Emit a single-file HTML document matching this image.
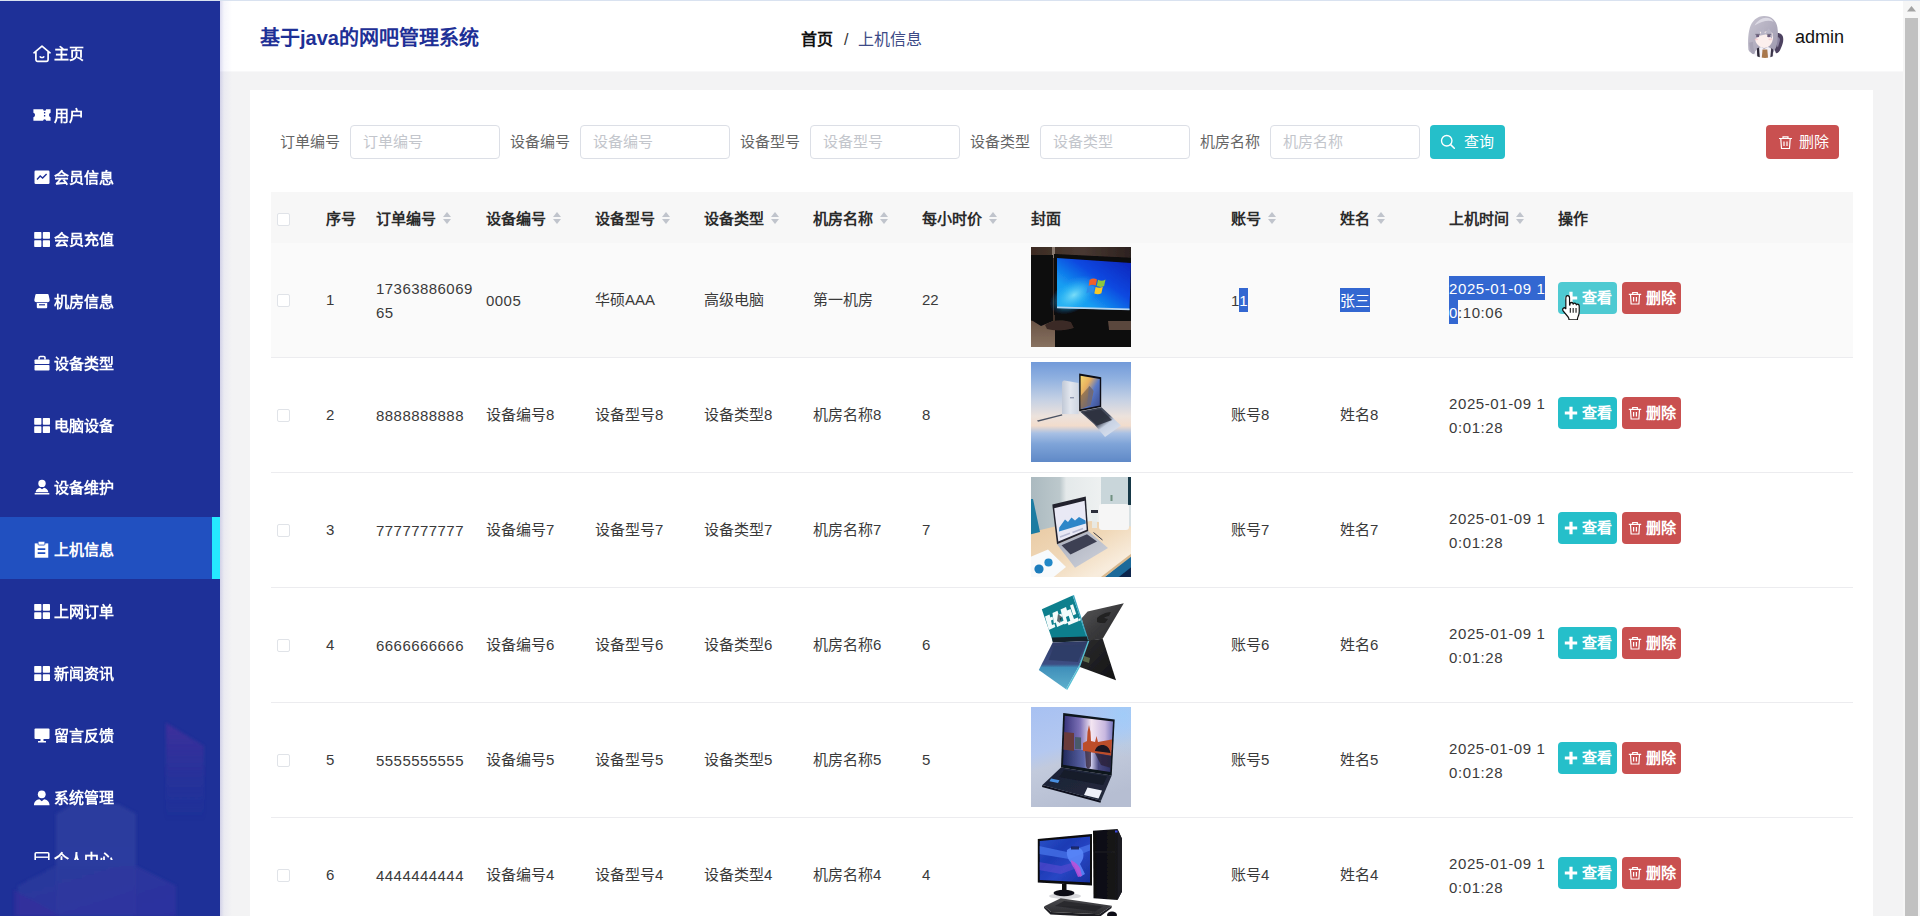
<!DOCTYPE html>
<html lang="zh-CN">
<head>
<meta charset="utf-8">
<title>基于java的网吧管理系统</title>
<style>
*{box-sizing:border-box}
html,body{margin:0;padding:0}
html{width:1920px;height:916px;overflow:hidden}
body{width:1920px;height:916px;overflow:hidden;position:relative;background:#f3f3f4;font-family:"Liberation Sans",sans-serif;font-size:15px;color:#333;-webkit-font-smoothing:antialiased}
svg{display:block}
/* ---------- sidebar ---------- */
.side{position:absolute;left:0;top:0;width:220px;height:916px;background:#1e3098;overflow:hidden;z-index:5}
.side .deco{position:absolute;left:0;top:690px;width:220px;height:226px}
.menu{position:absolute;left:0;top:22px;width:220px;height:838px;overflow:hidden;margin:0;padding:0;list-style:none}
.menu li{height:62px;line-height:64px;color:#fff;font-size:15px;font-weight:bold;padding-left:54px;position:relative;white-space:nowrap}
.menu li svg{position:absolute;left:33px;top:22px;width:18px;height:18px}
.menu li.on{background:#2150c0;border-right:8px solid #25eaff;top:-1px;line-height:66px}
.menu li.on svg{top:22.500px;left:32px;width:19px;height:19px}
/* ---------- header ---------- */
.top{position:absolute;left:220px;top:0;width:1683px;height:72px;background:#fff;border-top:1px solid #e4e4e8;border-bottom:1px solid #f8f8f9;z-index:2}
.top h1{position:absolute;left:40px;top:25px;margin:0;font-size:20px;line-height:24px;font-weight:bold;color:#1e3096;white-space:nowrap}
.crumb{position:absolute;left:581px;top:28px;font-size:16px;line-height:22px;white-space:nowrap;color:#3d4a86}
.crumb b{color:#111}
.crumb i{font-style:normal;color:#333;margin:0 10px 0 11px}
.user{position:absolute;left:1575px;top:26px;font-size:18px;line-height:20px;color:#111}
.avatar{position:absolute;left:1523px;top:13px;width:44px;height:44px}
.edge{position:absolute;left:220px;top:0;width:12px;height:916px;background:linear-gradient(90deg,rgba(90,90,190,.22) 0,rgba(90,90,190,.06) 4px,rgba(90,90,190,0) 12px);z-index:4}
/* ---------- card ---------- */
.card{position:absolute;left:250px;top:90px;width:1623px;height:826px;background:#fff;overflow:hidden}
.flt{position:absolute;top:35px;height:34px;line-height:34px;font-size:15px;color:#666;white-space:nowrap}
.flt span{position:absolute;left:0;top:0;width:60px}
.flt em{position:absolute;left:70px;top:0;width:150px;height:34px;border:1px solid #dcdfe6;border-radius:4px;background:#fff;font-style:normal;color:#c3c6cc;padding-left:12px;line-height:31px;font-size:15px}
.btn{position:absolute;height:34px;border-radius:4px;color:#fff;font-size:15px;line-height:34px;white-space:nowrap}
.btn svg{position:absolute}
.q{left:1180px;top:35px;width:75px;background:#25bfca}
.d{left:1516px;top:35px;width:73px;background:#c95050}
/* ---------- table ---------- */
table{position:absolute;left:21px;top:102px;width:1582px;border-collapse:separate;border-spacing:0;table-layout:fixed}
th,td{padding:0 0 0 10px;text-align:left;vertical-align:middle;font-size:15px;line-height:24px}
th{height:51px;background:#f7f7f7;padding-top:2px}
td>span,td>mark{position:relative;top:.5px}
th{font-weight:bold;color:#2b2b2b;white-space:nowrap}
td{height:115px;border-bottom:1px solid #ececef}
tr.hv td{background:#fafafa}
td{color:#3a3a3a}
.ck{display:block;width:13px;height:13px;border:1px solid #e0e3e8;border-radius:2px;background:#fff;margin-left:-4px;position:relative;top:.5px}
.st{display:inline-block;vertical-align:middle;width:10px;height:14px;margin-left:6px;position:relative;top:-2px}
.th{display:block;width:100px;height:100px;position:relative;top:-3px}
.ab{display:inline-block;vertical-align:middle;position:relative;top:-2px;width:59px;height:32px;border-radius:4px;color:#fff;font-size:15px;font-weight:bold;line-height:31px;padding-left:24px;margin-right:5px;white-space:nowrap}
.ab svg{position:absolute}
.v{background:#25bfca}.v.h{background:#4ecad2}
.x{background:#c95050}
mark{background:#3367d1;color:#fff;padding:4px 0 3px}
.n{letter-spacing:.45px}.t{letter-spacing:.6px}
/* ---------- scrollbar ---------- */
.sb{position:absolute;left:1903px;top:0;width:17px;height:916px;background:#f6f6f6;z-index:6}
.sb b{position:absolute;left:2px;top:18px;width:13px;height:898px;background:#c1c1c1}
.cur{position:absolute;left:1562px;top:294.500px;width:18.500px;height:25.500px;z-index:9}
</style>
</head>
<body>
<aside class="side">
<svg class="deco" viewBox="0 0 220 226">
<defs>
<linearGradient id="dg1" x1="0" y1="0" x2="0" y2="1"><stop offset="0" stop-color="#4a2d9c" stop-opacity=".75"/><stop offset="1" stop-color="#2c3aa0" stop-opacity="0"/></linearGradient>
<linearGradient id="dg2" x1="0" y1="0" x2="0" y2="1"><stop offset="0" stop-color="#2c3f9e"/><stop offset="1" stop-color="#2d3fa1"/></linearGradient>
<linearGradient id="dg3" x1="0" y1="0" x2="1" y2="1"><stop offset="0" stop-color="#2a3c9c"/><stop offset="1" stop-color="#3030a0"/></linearGradient>
<filter id="dgb" x="-5%" y="-5%" width="110%" height="110%"><feGaussianBlur stdDeviation="1.6"/></filter>
</defs>
<g filter="url(#dgb)">
<polygon points="166,33 204,56 204,130 166,130" fill="url(#dg1)"/>
<polygon points="56,124 74,114 118,114 136,124 136,226 56,226" fill="url(#dg2)" opacity=".9"/>
<polygon points="18,196 56,176 136,176 176,196 176,226 18,226" fill="url(#dg3)" opacity=".85"/>
<polygon points="14,200 60,226 14,226" fill="#3a2c9c" opacity=".55"/>
</g>
</svg>
<ul class="menu">
<li><svg viewBox="0 0 18 18" style="top:23px"><path d="M1 7.800 9 1.200 17 7.800" fill="none" stroke="#fff" stroke-width="1.700" stroke-linejoin="round" stroke-linecap="round"/><path d="M2.900 6.800V14.600a1.700 1.700 0 0 0 1.700 1.700h8.800a1.700 1.700 0 0 0 1.700-1.700V6.800" fill="none" stroke="#fff" stroke-width="1.700"/><path d="M7.200 11.800q1.800 1.500 3.600 0" fill="none" stroke="#fff" stroke-width="1.500" stroke-linecap="round"/></svg>主页</li>
<li><svg viewBox="0 0 18 18"><path d="M.4 3.200h9.700a1.500 1.500 0 0 0 3 0h4.500v3.600a2.300 2.300 0 0 0 0 4.400v3.600h-4.500a1.500 1.500 0 0 0-3 0H.4v-3.600a2.300 2.300 0 0 0 0-4.400Z" fill="#fff"/><path d="M11.600 6v6" stroke="#1e3098" stroke-width="1.300" stroke-dasharray="1.500 1.500"/></svg>用户</li>
<li><svg viewBox="0 0 18 18"><rect x="1.5" y="2.5" width="15" height="13.5" rx="1.2" fill="#fff"/><path d="M4 11.5 7.2 8l2.4 2 4-4" fill="none" stroke="#1e3098" stroke-width="1.4"/></svg>会员信息</li>
<li><svg viewBox="0 0 18 18"><g fill="#fff"><rect x="1.2" y="2" width="7.200" height="6.800" rx=".7"/><rect x="9.800" y="2" width="7.200" height="6.800" rx=".7"/><rect x="1.2" y="10.200" width="7.200" height="6.800" rx=".7"/><rect x="9.800" y="10.200" width="7.200" height="6.800" rx=".7"/></g></svg>会员充值</li>
<li><svg viewBox="0 0 18 18"><path d="M3.400 2h11.200a1 1 0 0 1 1 .8l1 4.700a2.300 2.300 0 0 1-2.300 2.700H3.700A2.300 2.300 0 0 1 1.400 7.500l1-4.700a1 1 0 0 1 1-.8Z" fill="#fff"/><path d="M3.800 11h10.400v4.200a1 1 0 0 1-1 1H4.800a1 1 0 0 1-1-1Z" fill="#fff"/><path d="M6 12.800h6" stroke="#1e3098" stroke-width="1.200"/></svg>机房信息</li>
<li><svg viewBox="0 0 18 18"><path d="M6 5.500V3.800A1.300 1.300 0 0 1 7.300 2.500h3.400A1.300 1.300 0 0 1 12 3.800V5.500" fill="none" stroke="#fff" stroke-width="1.600"/><rect x="1.500" y="5.500" width="15" height="4.600" rx=".8" fill="#fff"/><rect x="1.500" y="11" width="15" height="5.500" rx=".8" fill="#fff"/></svg>设备类型</li>
<li><svg viewBox="0 0 18 18"><g fill="#fff"><rect x="1.2" y="2" width="7.200" height="6.800" rx=".7"/><rect x="9.800" y="2" width="7.200" height="6.800" rx=".7"/><rect x="1.2" y="10.200" width="7.200" height="6.800" rx=".7"/><rect x="9.800" y="10.200" width="7.200" height="6.800" rx=".7"/></g></svg>电脑设备</li>
<li><svg viewBox="0 0 18 18"><circle cx="9" cy="5.400" r="3.700" fill="#fff"/><path d="M2.600 14.200c.3-2.600 2.300-4 4.400-4.400L9 11.200l2-1.400c2.100.4 4.100 1.800 4.400 4.400Z" fill="#fff"/><rect x="1.600" y="14.900" width="14.800" height="1.700" rx=".5" fill="#fff"/></svg>设备维护</li>
<li class="on"><svg viewBox="0 0 18 18"><path d="M2.600 3.200h12.800v13.600H2.600Z" fill="#fff"/><rect x="5.800" y="1.200" width="6.400" height="3.600" rx=".8" fill="#fff" stroke="#2150c0" stroke-width=".8"/><path d="M5.400 8.600h7.200M5.400 12.400h7.200" stroke="#2150c0" stroke-width="1.700"/></svg>上机信息</li>
<li><svg viewBox="0 0 18 18"><g fill="#fff"><rect x="1.2" y="2" width="7.200" height="6.800" rx=".7"/><rect x="9.800" y="2" width="7.200" height="6.800" rx=".7"/><rect x="1.2" y="10.200" width="7.200" height="6.800" rx=".7"/><rect x="9.800" y="10.200" width="7.200" height="6.800" rx=".7"/></g></svg>上网订单</li>
<li><svg viewBox="0 0 18 18"><g fill="#fff"><rect x="1.2" y="2" width="7.200" height="6.800" rx=".7"/><rect x="9.800" y="2" width="7.200" height="6.800" rx=".7"/><rect x="1.2" y="10.200" width="7.200" height="6.800" rx=".7"/><rect x="9.800" y="10.200" width="7.200" height="6.800" rx=".7"/></g></svg>新闻资讯</li>
<li><svg viewBox="0 0 18 18"><rect x="1.500" y="2.500" width="15" height="10.500" rx="1" fill="#fff"/><path d="M7.500 13h3v2h-3ZM5 15h8v1.400H5Z" fill="#fff"/></svg>留言反馈</li>
<li><svg viewBox="0 0 18 18" style="left:32px;top:21.500px;width:19.500px;height:19.500px"><circle cx="9" cy="5.800" r="3.600" fill="#fff"/><path d="M1.800 16c0-3.600 2.600-5.200 5-5.600L9 12.200l2.200-1.800c2.400.4 5 2 5 5.600Z" fill="#fff"/></svg>系统管理</li>
<li><svg viewBox="0 0 18 18"><rect x="2.200" y="2.800" width="13.600" height="11" rx="1" fill="none" stroke="#fff" stroke-width="1.600"/><path d="M2.200 7.200h13.600" stroke="#fff" stroke-width="1.400"/></svg>个人中心</li>
</ul>
</aside>
<div class="edge"></div>
<header class="top">
<h1>基于java的网吧管理系统</h1>
<nav class="crumb"><b>首页</b><i>/</i>上机信息</nav>
<svg class="avatar" viewBox="0 0 46 46"><defs>
<clipPath id="avc"><circle cx="23" cy="23" r="23"/></clipPath>
<linearGradient id="avh" x1="0" y1="0" x2="1" y2="1"><stop offset="0" stop-color="#c9c6d2"/><stop offset=".5" stop-color="#b3afc0"/><stop offset="1" stop-color="#9d98ae"/></linearGradient>
<filter id="avb" x="-5%" y="-5%" width="110%" height="110%"><feGaussianBlur stdDeviation=".45"/></filter>
</defs><g clip-path="url(#avc)"><rect width="46" height="46" fill="#fff"/><g filter="url(#avb)">
<path d="M33 21c3-2 7-1 8.500 2 1.500 4 0 9-2 13-1 3-3 5-5 5l-3-8Z" fill="#4d4360"/>
<path d="M36 24c1.500 0 3 1.500 2.500 4l-2 7-2-4Z" fill="#8c84a0"/>
<path d="M6 40c-1-8-1-18 1-25C9 7 15 2 22 2c8 0 13 5 14 12 1 6 .5 13-1 20l-4 8H9Z" fill="url(#avh)"/>
<path d="M12 12c3-5 8-8 12-8 3 0 6 1 8 4-5-2-12-1-20 4Z" fill="#dcdae4"/>
<path d="M13 24c0-3 1-5 2-6l6 1 6-1.500 4 3c.8 3 .5 6-.5 8.500-1.500 4-5 6.500-8.500 6.500S14 32 13 28Z" fill="#fcefed"/>
<path d="M12 22c1-4 3-6 5-7l1 6 3-6 2 5 4-5 4 7-1 4-4-5-5 1-5 1-3 4Z" fill="#b9b5c6"/>
<ellipse cx="15.300" cy="23" rx="1.700" ry="1.400" fill="#6c5c7c"/><ellipse cx="27" cy="23" rx="1.800" ry="1.400" fill="#6c5c7c"/>
<path d="M13 21.300h4.500M24.800 21.300h4.600" stroke="#4a4058" stroke-width=".7"/>
<ellipse cx="14" cy="26.500" rx="2" ry="1" fill="#f6c8cc" opacity=".7"/><ellipse cx="28.500" cy="26.500" rx="2" ry="1" fill="#f6c8cc" opacity=".7"/>
<path d="M11 46c0-6 3-10 8-11.500l3 2 4-2c4 1 7 5 7 11.500Z" fill="#f4f2f8"/>
<path d="M14.500 36l2.300-1 .8 11h-2.600Z" fill="#2a2634"/><path d="M29.500 35.500l2 1.500-.5 9h-2.500Z" fill="#3a3448"/>
<path d="M20.400 37h5l.8 9h-6.600Z" fill="#a8784e"/>
<path d="M6.500 30c.5 5 1.500 9 3 12l3-1c-1.500-4-2-8-2-12Z" fill="#a8a4b6"/>
</g></g></svg>
<div class="user">admin</div>
</header>
<main class="card">
<div class="flt" style="left:30px"><span>订单编号</span><em>订单编号</em></div>
<div class="flt" style="left:260px"><span>设备编号</span><em>设备编号</em></div>
<div class="flt" style="left:490px"><span>设备型号</span><em>设备型号</em></div>
<div class="flt" style="left:720px"><span>设备类型</span><em>设备类型</em></div>
<div class="flt" style="left:950px"><span>机房名称</span><em>机房名称</em></div>
<div class="btn q" style="padding-left:34px"><svg style="left:10px;top:9px" width="16" height="16" viewBox="0 0 19 19"><circle cx="8" cy="8" r="6.2" fill="none" stroke="#fff" stroke-width="1.6"/><path d="M12.600 12.600 17 17" stroke="#fff" stroke-width="1.800" stroke-linecap="round"/></svg>查询</div>
<div class="btn d" style="padding-left:33px"><svg style="left:12px;top:10px" width="15" height="15" viewBox="0 0 15 15"><path d="M1 3.500h13M5 3.300V1.800h5v1.500M2.800 3.800l.7 9.700h8l.7-9.700M6 6.500v4.500M9 6.500v4.500" fill="none" stroke="#fff" stroke-width="1.200"/></svg>删除</div>
<table>
<colgroup><col style="width:45px"><col style="width:50px"><col style="width:110px"><col style="width:109px"><col style="width:109px"><col style="width:109px"><col style="width:109px"><col style="width:109px"><col style="width:200px"><col style="width:109px"><col style="width:109px"><col style="width:109px"><col style="width:305px"></colgroup>
<thead><tr>
<th><i class="ck"></i></th>
<th>序号</th>
<th>订单编号<svg class="st" viewBox="0 0 10 14"><path d="M5 1 9 6H1Z" fill="#c0c4cc"/><path d="M5 13 9 8H1Z" fill="#c0c4cc"/></svg></th>
<th>设备编号<svg class="st" viewBox="0 0 10 14"><path d="M5 1 9 6H1Z" fill="#c0c4cc"/><path d="M5 13 9 8H1Z" fill="#c0c4cc"/></svg></th>
<th>设备型号<svg class="st" viewBox="0 0 10 14"><path d="M5 1 9 6H1Z" fill="#c0c4cc"/><path d="M5 13 9 8H1Z" fill="#c0c4cc"/></svg></th>
<th>设备类型<svg class="st" viewBox="0 0 10 14"><path d="M5 1 9 6H1Z" fill="#c0c4cc"/><path d="M5 13 9 8H1Z" fill="#c0c4cc"/></svg></th>
<th>机房名称<svg class="st" viewBox="0 0 10 14"><path d="M5 1 9 6H1Z" fill="#c0c4cc"/><path d="M5 13 9 8H1Z" fill="#c0c4cc"/></svg></th>
<th>每小时价<svg class="st" viewBox="0 0 10 14"><path d="M5 1 9 6H1Z" fill="#c0c4cc"/><path d="M5 13 9 8H1Z" fill="#c0c4cc"/></svg></th>
<th>封面</th>
<th>账号<svg class="st" viewBox="0 0 10 14"><path d="M5 1 9 6H1Z" fill="#c0c4cc"/><path d="M5 13 9 8H1Z" fill="#c0c4cc"/></svg></th>
<th>姓名<svg class="st" viewBox="0 0 10 14"><path d="M5 1 9 6H1Z" fill="#c0c4cc"/><path d="M5 13 9 8H1Z" fill="#c0c4cc"/></svg></th>
<th>上机时间<svg class="st" viewBox="0 0 10 14"><path d="M5 1 9 6H1Z" fill="#c0c4cc"/><path d="M5 13 9 8H1Z" fill="#c0c4cc"/></svg></th>
<th>操作</th>
</tr></thead>
<tbody>
<tr class="hv">
<td><i class="ck"></i></td>
<td>1</td>
<td><span class="n">17363886069<br>65</span></td>
<td><span class="n">0005</span></td>
<td>华硕AAA</td>
<td>高级电脑</td>
<td>第一机房</td>
<td>22</td>
<td><svg class="th" viewBox="0 0 100 100"><defs>
<linearGradient id="a1" x1="0" y1="0" x2="1" y2="0"><stop offset="0" stop-color="#3a2a22"/><stop offset=".5" stop-color="#4a3932"/><stop offset="1" stop-color="#2a201e"/></linearGradient>
<linearGradient id="a2" x1="1" y1="0" x2="0" y2="1"><stop offset="0" stop-color="#0a22b8"/><stop offset=".4" stop-color="#0b48e0"/><stop offset=".72" stop-color="#149cf2"/><stop offset="1" stop-color="#22b0f4"/></linearGradient>
<radialGradient id="a3" cx=".5" cy=".5" r=".5"><stop offset="0" stop-color="#7fe0f8" stop-opacity=".95"/><stop offset=".5" stop-color="#3cc0f4" stop-opacity=".6"/><stop offset="1" stop-color="#1aa0f0" stop-opacity="0"/></radialGradient>
<linearGradient id="a4" x1="0" y1="0" x2="0" y2="1"><stop offset="0" stop-color="#6a5446"/><stop offset="1" stop-color="#8c7664"/></linearGradient>
<filter id="ab" x="-5%" y="-5%" width="110%" height="110%"><feGaussianBlur stdDeviation=".7"/></filter>
<clipPath id="ac"><rect width="100" height="100"/></clipPath>
</defs><g clip-path="url(#ac)"><g filter="url(#ab)">
<rect x="-3" y="-3" width="106" height="106" fill="url(#a1)"/>
<rect x="21" y="-3" width="3" height="14" fill="#8a7a70"/>
<rect x="-3" y="74" width="32" height="30" fill="url(#a4)"/>
<path d="M-3 8h25v66l-12 5-13-8Z" fill="#0b0b10"/>
<path d="M24 66h80v40H24Z" fill="#07070a"/>
<path d="M14 78c6-5 16-6 26-3l3 6c-8 3-20 3-27 1Z" fill="#3a2c26"/>
<path d="M77 74h27v9H78Z" fill="#5a473c"/>
<path d="M23 7 103 11v57L23 68Z" fill="#08080c"/>
<path d="M26 11 100 16 98.500 63 26 61Z" fill="url(#a2)"/>
<ellipse cx="43" cy="48" rx="27" ry="16" fill="url(#a3)" transform="rotate(-32 43 48)"/>
<path d="M26 59.500 98.500 61.500v1.800L26 61.300Z" fill="#b4d4ee"/>
</g>
<g filter="url(#ab)"><path d="M58.500 33c2.500-1.800 5-1.800 7.500-.6l-1.300 6.200c-2.400-1.100-4.700-1-7 .4Z" fill="#f0602a"/><path d="M67 32.800c2.500 1.200 5 1.300 7.500-.3l-1.400 6.400c-2.400 1.400-4.800 1.300-7.300.2Z" fill="#8cc63c"/><path d="M56.500 40.200c2.400-1.500 4.700-1.600 7.100-.5l-1.300 6.300c-2.400-1.100-4.700-1-7 .4Z" fill="#2a8cea"/><path d="M64.600 40c2.400 1.100 4.800 1.200 7.200-.2l-1.400 6.400c-2.400 1.400-4.700 1.300-7.100.2Z" fill="#f8c828"/></g>
</g></svg></td>
<td><span class="n" style="letter-spacing:.9px">1<mark>1</mark></span></td>
<td><mark>张三</mark></td>
<td><span class="t"><mark>2025-01-09 1</mark><br><mark>0</mark>:10:06</span></td>
<td><span class="ab v h"><svg style="left:6px;top:9px" width="14" height="14" viewBox="0 0 14 14"><path d="M7 .8v12.400M.8 7h12.400" stroke="#fff" stroke-width="3.2"/></svg>查看</span><span class="ab x"><svg style="left:6px;top:8.500px" width="14" height="14" viewBox="0 0 14 14"><path d="M.8 3.300h12.400M4.700 3.100V1.500h4.600v1.600M2.500 3.600l.6 9.400h7.800l.6-9.400M5.600 6v4.600M8.400 6v4.600" fill="none" stroke="#fff" stroke-width="1.200"/></svg>删除</span></td>
</tr>
<tr>
<td><i class="ck"></i></td>
<td>2</td>
<td><span class="n">8888888888</span></td>
<td>设备编号8</td>
<td>设备型号8</td>
<td>设备类型8</td>
<td>机房名称8</td>
<td>8</td>
<td><svg class="th" viewBox="0 0 100 100"><defs>
<linearGradient id="b1" x1="0" y1="0" x2="0" y2="1"><stop offset="0" stop-color="#6c96d8"/><stop offset=".18" stop-color="#8fb0e0"/><stop offset=".38" stop-color="#c4d0e4"/><stop offset=".54" stop-color="#ece2dc"/><stop offset=".63" stop-color="#f2dccc"/><stop offset=".7" stop-color="#a8c0e4"/><stop offset=".8" stop-color="#7fa4d8"/><stop offset="1" stop-color="#5a84c4"/></linearGradient>
<linearGradient id="b2" x1="0" y1="0" x2="1" y2="0"><stop offset="0" stop-color="#c0c8d6"/><stop offset=".5" stop-color="#e2e6ee"/><stop offset="1" stop-color="#cfd6e2"/></linearGradient>
<linearGradient id="b3" x1="0" y1="0" x2="1" y2="1"><stop offset="0" stop-color="#f4d870"/><stop offset=".3" stop-color="#e8b060"/><stop offset=".55" stop-color="#5a7ac8"/><stop offset="1" stop-color="#3a4a8c"/></linearGradient>
<linearGradient id="b4" x1="0" y1="0" x2="1" y2="1"><stop offset="0" stop-color="#343a48"/><stop offset=".5" stop-color="#4a5162"/><stop offset=".62" stop-color="#c8d2e4"/><stop offset="1" stop-color="#dfe6f2"/></linearGradient>
<filter id="bb" x="-5%" y="-5%" width="110%" height="110%"><feGaussianBlur stdDeviation=".6"/></filter>
<clipPath id="bc"><rect width="100" height="100"/></clipPath>
</defs><g clip-path="url(#bc)"><g filter="url(#bb)">
<rect x="-3" y="-3" width="106" height="106" fill="url(#b1)"/>
<path d="M31 21c0-1.500 1-2.500 2.500-2.400L47.500 21v31L31 52Z" fill="url(#b2)"/>
<path d="M39 35h4v1.400h-4Z" fill="#9098b0"/>
<path d="M6 58.600 31 52.300l.3 1.300L7 59.800Z" fill="#4a5264"/>
<path d="M48.200 11.500 70.200 15.300V45L48.200 49.300Z" fill="#0c0e14"/>
<path d="M49.600 13.800 68.800 17V43.600L49.600 47.300Z" fill="url(#b3)"/>
<path d="M49.600 47.300V34l9-10 4 5-3 14Z" fill="#8a6a48" opacity=".75"/>
<path d="M58 24l4 4-2.500 15-3.500 1Z" fill="#6a6a80" opacity=".8"/>
<path d="M49 49.500 70.500 45.200 90 63.500 74 75 63 62Z" fill="url(#b4)"/>
<path d="M52.500 50.500 69.500 47 81 58 66 63.500Z" fill="#2c313e" opacity=".9"/>
</g></g></svg></td>
<td>账号8</td>
<td>姓名8</td>
<td><span class="t">2025-01-09 1<br>0:01:28</span></td>
<td><span class="ab v"><svg style="left:6px;top:9px" width="14" height="14" viewBox="0 0 14 14"><path d="M7 .8v12.400M.8 7h12.400" stroke="#fff" stroke-width="3.2"/></svg>查看</span><span class="ab x"><svg style="left:6px;top:8.500px" width="14" height="14" viewBox="0 0 14 14"><path d="M.8 3.300h12.400M4.700 3.100V1.500h4.600v1.600M2.500 3.600l.6 9.400h7.800l.6-9.400M5.600 6v4.600M8.400 6v4.600" fill="none" stroke="#fff" stroke-width="1.200"/></svg>删除</span></td>
</tr>
<tr>
<td><i class="ck"></i></td>
<td>3</td>
<td><span class="n">7777777777</span></td>
<td>设备编号7</td>
<td>设备型号7</td>
<td>设备类型7</td>
<td>机房名称7</td>
<td>7</td>
<td><svg class="th" viewBox="0 0 100 100"><defs>
<linearGradient id="c1" x1="0" y1="0" x2="1" y2="0"><stop offset="0" stop-color="#a9b8be"/><stop offset=".3" stop-color="#bcc8cc"/><stop offset=".36" stop-color="#e4e9ea"/><stop offset=".7" stop-color="#eef1f1"/><stop offset="1" stop-color="#d4dde0"/></linearGradient>
<linearGradient id="c2" x1="0" y1="0" x2="1" y2="1"><stop offset="0" stop-color="#e8c9a2"/><stop offset=".45" stop-color="#f0d8b8"/><stop offset=".75" stop-color="#f8ecdc"/><stop offset="1" stop-color="#f6ead8"/></linearGradient>
<linearGradient id="c3" x1="0" y1="0" x2="1" y2="1"><stop offset="0" stop-color="#a8adba"/><stop offset="1" stop-color="#d0d3dc"/></linearGradient>
<filter id="cb" x="-5%" y="-5%" width="110%" height="110%"><feGaussianBlur stdDeviation=".65"/></filter>
<clipPath id="cc"><rect width="100" height="100"/></clipPath>
</defs><g clip-path="url(#cc)"><g filter="url(#cb)">
<rect x="-3" y="-3" width="106" height="106" fill="url(#c1)"/>
<rect x="70" y="-3" width="27" height="34" fill="#c9d6da"/>
<rect x="97" y="-3" width="6" height="31" fill="#173846"/>
<path d="M-3 56 26 49 60 44 103 50v56H-3Z" fill="url(#c2)"/>
<path d="M-3 22h5l7 33-12 3Z" fill="#1f7ba2"/>
<path d="M68 30c0-2 1-3 3-3h24c2 0 3 1 3 3v20c0 2-1 3-3 3H71c-2 0-3-1-3-3Z" fill="#f6f6f6"/>
<path d="M79.500 18h2v6h-2Z" fill="#5a806a" opacity=".8"/>
<path d="M60 33h7v3h-7Z" fill="#2a2e3a"/><path d="M61 36h5v15h-5Z" fill="#e6ecee" opacity=".8"/>
<path d="M103 76 70 103h36Z" fill="#1a6a9a"/><path d="M103 88 84 103h22Z" fill="#10284e"/>
<path d="M103 74.500 68 101.500l2 1.500 33-25.500Z" fill="#d8b88e"/>
<path d="M-3 81 17 72.500 35 90 19 103H-3Z" fill="#f8fafc"/>
<circle cx="8" cy="92" r="4.600" fill="#1c7cbc"/><circle cx="17.500" cy="85.500" r="4.100" fill="#2088c8"/>
<path d="M26 67.200 57.200 54 77 71 44 90.700Z" fill="url(#c3)"/>
<path d="M30.500 68.300 56 57.300 66 64.500 39.500 77.500Z" fill="#3e3f52"/>
<path d="M21.300 27.500 54.800 19.600 57.200 54 26 67.200Z" fill="#23242e"/>
<path d="M23.200 31.300 53.600 23.800 55.700 52.800 27.300 64.600Z" fill="#e9e9f5"/>
<path d="M28 54.500 28.300 50.500 34 42.500 37 45 40.500 40.500 44 43.500 48 40 54.500 43.500 54.800 46.500Z" fill="#2e86c8"/><path d="M29 60 39 56.300M41.500 55.500 52 51.500" stroke="#b8bcd4" stroke-width="1.600" fill="none"/>
<path d="M62.500 55.500 71.500 63" stroke="#3a3a44" stroke-width="1" fill="none"/>
</g></g></svg></td>
<td>账号7</td>
<td>姓名7</td>
<td><span class="t">2025-01-09 1<br>0:01:28</span></td>
<td><span class="ab v"><svg style="left:6px;top:9px" width="14" height="14" viewBox="0 0 14 14"><path d="M7 .8v12.400M.8 7h12.400" stroke="#fff" stroke-width="3.2"/></svg>查看</span><span class="ab x"><svg style="left:6px;top:8.500px" width="14" height="14" viewBox="0 0 14 14"><path d="M.8 3.300h12.400M4.700 3.100V1.500h4.600v1.600M2.500 3.600l.6 9.400h7.800l.6-9.400M5.600 6v4.600M8.400 6v4.600" fill="none" stroke="#fff" stroke-width="1.200"/></svg>删除</span></td>
</tr>
<tr>
<td><i class="ck"></i></td>
<td>4</td>
<td><span class="n">6666666666</span></td>
<td>设备编号6</td>
<td>设备型号6</td>
<td>设备类型6</td>
<td>机房名称6</td>
<td>6</td>
<td><svg class="th" viewBox="0 0 100 100"><defs>
<linearGradient id="d1" x1="0" y1="0" x2="0" y2="1"><stop offset="0" stop-color="#2e3a64"/><stop offset=".48" stop-color="#3e4f84"/><stop offset=".55" stop-color="#3f8fba"/><stop offset="1" stop-color="#5fb0cc"/></linearGradient>
<linearGradient id="d2" x1="0" y1="0" x2="1" y2="1"><stop offset="0" stop-color="#5a5a5c"/><stop offset=".5" stop-color="#3a3a3c"/><stop offset="1" stop-color="#2a2a2c"/></linearGradient>
<linearGradient id="d3" x1="0" y1="0" x2="1" y2="1"><stop offset="0" stop-color="#2c2c2e"/><stop offset="1" stop-color="#121214"/></linearGradient>
<filter id="db" x="-5%" y="-5%" width="110%" height="110%"><feGaussianBlur stdDeviation=".55"/></filter>
<clipPath id="dc"><rect width="100" height="100"/></clipPath>
</defs><g clip-path="url(#dc)"><rect width="100" height="100" fill="#fff"/><g filter="url(#db)">
<path d="M50.600 26.300 56.600 19.600 92.800 11.200 71.700 46.700 56.500 49Z" fill="url(#d2)"/>
<path d="M66 26c3-3 9-6 14-6l-2 4c-2 0-4 1-5 2l4 1-3 4c-3 0-6 0-8-1Z" fill="#1c1c1e" opacity=".85"/>
<path d="M56 48.500 71.700 46.700 85 88.300 47.600 74.500Z" fill="url(#d3)"/>
<path d="M53 64l6 2-1 5-6-2Z" fill="#6a7a54" opacity=".8"/>
<path d="M10.800 17.200 41.600 3.400 57 48.500 22 50Z" fill="#0f7f8d"/>
<path d="M41.600 3.400 43 3l14.600 45-1 .6Z" fill="#3aa6c0"/>
<path d="M20.800 45.500 56 44.500l1 4.500-35.200 1.500Z" fill="#16222c"/>
<g fill="#f4fbfb"><path d="M14 24.500l4.500-2 .8 3 2.200-1 .7 3-2.200 1 1 4.500 2.500-1 .8 3-6.500 3Z"/><path d="M21.500 21l5-2.300 1.200 4 2.800-1.300 1 3.500-2.800 1.300 1 3.700 3.400-1.500.9 3-7.900 3.600-1.300-4.500-2 .9Z"/><path d="M29.500 17.500l5.500-2.500 1 3.500 3.500-1.600L43 27l3.800-1.400 1 3.400-10.300 4.300-1-3.300 2.800-1.200-1.600-5-2.800 1.200 1.800 6-3.200 1.400Z"/><path d="M39 13.500l3-1.300 3.200 9.800-3 1.200Z"/><path d="M47.300 27l1.800-.7.700 2-1.800.7Z"/></g>
<path d="M27 22l4 3-2 6-3-2Z" fill="#1c2c34" opacity=".7"/>
<path d="M21.700 50.500 56.800 49 47.600 74.500 35 97.300 7.800 78Z" fill="url(#d1)"/>
<path d="M23 54 53.500 52.500 47 70 17.500 68Z" fill="#2f3c66" opacity=".9"/>
<path d="M56.800 49 58.300 49 49 75 36.400 97.800 35 97.300 47.600 74.500Z" fill="#58c0d4"/>
</g></g></svg></td>
<td>账号6</td>
<td>姓名6</td>
<td><span class="t">2025-01-09 1<br>0:01:28</span></td>
<td><span class="ab v"><svg style="left:6px;top:9px" width="14" height="14" viewBox="0 0 14 14"><path d="M7 .8v12.400M.8 7h12.400" stroke="#fff" stroke-width="3.2"/></svg>查看</span><span class="ab x"><svg style="left:6px;top:8.500px" width="14" height="14" viewBox="0 0 14 14"><path d="M.8 3.300h12.400M4.700 3.100V1.500h4.600v1.600M2.500 3.600l.6 9.400h7.800l.6-9.400M5.600 6v4.600M8.400 6v4.600" fill="none" stroke="#fff" stroke-width="1.200"/></svg>删除</span></td>
</tr>
<tr>
<td><i class="ck"></i></td>
<td>5</td>
<td><span class="n">5555555555</span></td>
<td>设备编号5</td>
<td>设备型号5</td>
<td>设备类型5</td>
<td>机房名称5</td>
<td>5</td>
<td><svg class="th" viewBox="0 0 100 100"><defs>
<linearGradient id="e1" x1="0" y1="0" x2=".3" y2="1"><stop offset="0" stop-color="#a6c0f2"/><stop offset=".45" stop-color="#b4c8f0"/><stop offset=".6" stop-color="#c2cadc"/><stop offset="1" stop-color="#b6bed2"/></linearGradient>
<linearGradient id="e2" x1="0" y1="0" x2="1" y2="0"><stop offset="0" stop-color="#2a2870"/><stop offset=".35" stop-color="#7e72b8"/><stop offset=".55" stop-color="#f4e6f2"/><stop offset=".8" stop-color="#c8b8e0"/><stop offset="1" stop-color="#5a60b0"/></linearGradient>
<linearGradient id="e3" x1="0" y1="0" x2="1" y2="0"><stop offset="0" stop-color="#1c2456"/><stop offset=".42" stop-color="#5c66a8"/><stop offset=".55" stop-color="#cfcdec"/><stop offset=".68" stop-color="#4a4a84"/><stop offset="1" stop-color="#242a5c"/></linearGradient>
<linearGradient id="e4" x1="0" y1="0" x2="1" y2="1"><stop offset="0" stop-color="#1c2236"/><stop offset="1" stop-color="#232a3c"/></linearGradient>
<radialGradient id="e5"><stop offset="0" stop-color="#9ecdfa" stop-opacity=".8"/><stop offset="1" stop-color="#9ecdfa" stop-opacity="0"/></radialGradient>
<filter id="eb" x="-5%" y="-5%" width="110%" height="110%"><feGaussianBlur stdDeviation=".6"/></filter>
<clipPath id="ec"><rect width="100" height="100"/></clipPath>
<clipPath id="es"><path d="M33.800 8.800 82 14.600 79.300 65 32 57.800Z"/></clipPath>
</defs><g clip-path="url(#ec)"><g filter="url(#eb)">
<rect x="-3" y="-3" width="106" height="106" fill="url(#e1)"/>
<ellipse cx="92" cy="8" rx="40" ry="42" fill="url(#e5)"/>
<path d="M30 60.600 80.700 68.400 70 93.700 11.400 78Z" fill="url(#e4)"/>
<path d="M11.400 78 70 93.700l-.5 2L11 80Z" fill="#0c101c"/>
<path d="M33 63 76 69.500 72 78 28 70Z" fill="#141a2a"/>
<path d="M56.500 80.500 71 83.500 67.500 91.500 53 88Z" fill="#eef0f8"/>
<path d="M20 71.500 28.500 73.200 27 76 18.500 74.200Z" fill="#4a90e0"/>
<path d="M32.200 6 83.700 12.400 80.700 68.400 30 60.600Z" fill="#0e121a"/>
<g clip-path="url(#es)">
<rect x="30" y="5" width="55" height="38" fill="url(#e2)"/>
<rect x="30" y="43" width="55" height="25" fill="url(#e3)"/>
<path d="M32 25 43 26v18l-11-1.500Z" fill="#6a3a3a"/><path d="M44 30l6 .5v12l-6-.5Z" fill="#4a5a6a"/>
<path d="M52 36 56 34l.5-9 1.500-7 1.500 7 .5 9 4 1 1.500-6 1.500 6 16-3v10L82 49 52 44Z" fill="#bc4e2c"/>
<path d="M64 44c1-5 6-7 10-5.500 3 1 5 4 5.500 7.500Z" fill="#1a1420"/>
<path d="M54 44 60 45v14l-3 4-2-4Z" fill="#3a2a40" opacity=".8"/>
<path d="M64 46 80 49v12L70 58Z" fill="#2a2238" opacity=".8"/>
</g>
</g></g></svg></td>
<td>账号5</td>
<td>姓名5</td>
<td><span class="t">2025-01-09 1<br>0:01:28</span></td>
<td><span class="ab v"><svg style="left:6px;top:9px" width="14" height="14" viewBox="0 0 14 14"><path d="M7 .8v12.400M.8 7h12.400" stroke="#fff" stroke-width="3.2"/></svg>查看</span><span class="ab x"><svg style="left:6px;top:8.500px" width="14" height="14" viewBox="0 0 14 14"><path d="M.8 3.300h12.400M4.700 3.100V1.500h4.600v1.600M2.500 3.600l.6 9.400h7.800l.6-9.400M5.600 6v4.600M8.400 6v4.600" fill="none" stroke="#fff" stroke-width="1.200"/></svg>删除</span></td>
</tr>
<tr>
<td><i class="ck"></i></td>
<td>6</td>
<td><span class="n">4444444444</span></td>
<td>设备编号4</td>
<td>设备型号4</td>
<td>设备类型4</td>
<td>机房名称4</td>
<td>4</td>
<td><svg class="th" viewBox="0 0 100 100"><defs>
<linearGradient id="f1" x1="0" y1="0" x2="1" y2="1"><stop offset="0" stop-color="#2a52c8"/><stop offset=".35" stop-color="#1c3ab4"/><stop offset=".6" stop-color="#2846c4"/><stop offset="1" stop-color="#16309c"/></linearGradient>
<linearGradient id="f2" x1="0" y1="0" x2="1" y2="0"><stop offset="0" stop-color="#0c0c10"/><stop offset=".8" stop-color="#15151a"/><stop offset="1" stop-color="#0a0a0e"/></linearGradient>
<linearGradient id="f3" x1="0" y1="0" x2="0" y2="1"><stop offset="0" stop-color="#4a4a4e"/><stop offset="1" stop-color="#2c2c30"/></linearGradient>
<filter id="fb" x="-5%" y="-5%" width="110%" height="110%"><feGaussianBlur stdDeviation=".55"/></filter>
<clipPath id="fc"><rect width="100" height="100"/></clipPath>
<clipPath id="fs"><path d="M8.700 19 59 14.500V60.500L8.700 58Z"/></clipPath>
</defs><g clip-path="url(#fc)"><rect width="100" height="100" fill="#fff"/><g filter="url(#fb)">
<ellipse cx="34" cy="74" rx="16" ry="3" fill="#d8d8dc"/>
<path d="M31 62h4.500v9H31Z" fill="#0c0c10"/>
<ellipse cx="33" cy="71" rx="10.500" ry="3.300" fill="#101014"/>
<path d="M6.800 17 61 12.100V63.600L6.800 60.400Z" fill="#08080c"/>
<g clip-path="url(#fs)">
<rect x="8" y="14" width="52" height="47" fill="url(#f1)"/>
<path d="M8 24 36 30 60 22v6L38 37 8 32Z" fill="#4a78ec" opacity=".7"/>
<path d="M8 40 30 44 44 40l2 6-16 6L8 48Z" fill="#5a4ad0" opacity=".6"/>
<path d="M36 28c5-4 12-4 15 0 3 5 1 10-2 14l5 10-5 3-6-12c-5-3-8-9-7-15Z" fill="#5a86f8" opacity=".9"/>
<path d="M40 38c3 2 6 3 9 8l2 8-4 1-4-9c-2-2-3-5-3-8Z" fill="#c050d8" opacity=".85"/>
<path d="M40 24.500h8v3h-8Z" fill="#10184a" opacity=".8"/>
</g>
<path d="M62 8.700 86.500 7 91 16.700V69.500L86.500 78 62.500 76.300Z" fill="url(#f2)"/>
<path d="M86.500 7 91 16.700V69.500L86.500 78Z" fill="#1e1e24"/>
<path d="M84 8.500h2.500v2H84Z" fill="#3a4ae0"/>
<path d="M64 30h20" stroke="#24242a" stroke-width=".8"/>
<path d="M13.300 84.200 29.700 76.300 80.800 83.700 68.300 92.200 20 90Z" fill="url(#f3)"/>
<path d="M13.300 84.200 20 90 68.300 92.200 80.800 83.700 80.500 86 68.500 95 19.500 92.500 13 86Z" fill="#1e1e22"/>
<path d="M24 84 33 79 72 84.500 64 89.500Z" fill="#242428" opacity=".8"/>
<ellipse cx="81" cy="93" rx="5" ry="3.500" fill="#0e0e12"/>
</g></g></svg></td>
<td>账号4</td>
<td>姓名4</td>
<td><span class="t">2025-01-09 1<br>0:01:28</span></td>
<td><span class="ab v"><svg style="left:6px;top:9px" width="14" height="14" viewBox="0 0 14 14"><path d="M7 .8v12.400M.8 7h12.400" stroke="#fff" stroke-width="3.2"/></svg>查看</span><span class="ab x"><svg style="left:6px;top:8.500px" width="14" height="14" viewBox="0 0 14 14"><path d="M.8 3.300h12.400M4.700 3.100V1.500h4.600v1.600M2.500 3.600l.6 9.400h7.800l.6-9.400M5.600 6v4.600M8.400 6v4.600" fill="none" stroke="#fff" stroke-width="1.200"/></svg>删除</span></td>
</tr>
</tbody></table>
</main>
<div style="position:absolute;left:0;top:0;width:1920px;height:1px;background:#d9e2f0;z-index:8"></div>
<div class="sb"><svg style="position:absolute;left:4px;top:6px" width="9" height="6" viewBox="0 0 9 6"><path d="M0 5.500 4.500 0 9 5.500Z" fill="#a3a3a3"/></svg><b></b></div>
<svg class="cur" viewBox="1.2 0.9 17.4 21.700" preserveAspectRatio="none"><path d="M6.500 1.500c1.200 0 1.800.8 1.800 2v6l.4-.1V8.800c0-1 .7-1.500 1.500-1.500s1.400.5 1.500 1.300c.3-.5.800-.8 1.400-.8.900 0 1.400.6 1.500 1.400.3-.3.700-.5 1.200-.5 1 0 1.600.8 1.600 1.900V15c0 2.200-.5 3.400-1.200 4.600-.4.700-.5 1.400-.5 2.400H7.800c0-1-.3-1.700-1-2.600L2.300 14.500c-.6-.8-.6-1.700.1-2.300.7-.6 1.600-.5 2.300.2l.1.200V3.500c0-1.200.6-2 1.700-2Z" fill="#fff" stroke="#111" stroke-width="1.100" stroke-linejoin="round"/><path d="M9 12v4M11.700 12v4M14.400 12v4" stroke="#111" stroke-width="1"/></svg>
</body>
</html>
